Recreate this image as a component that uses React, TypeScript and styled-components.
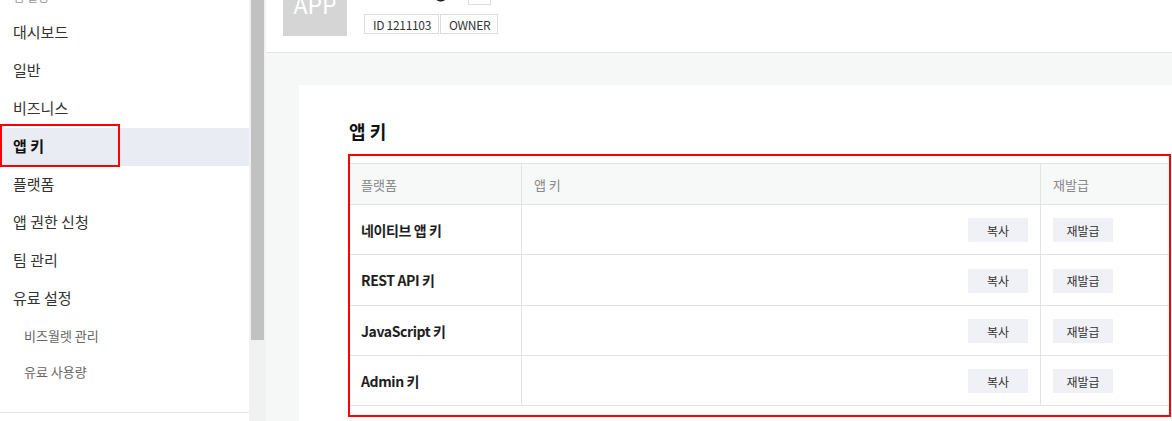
import React from "react";
import styled, { createGlobalStyle } from "styled-components";

const Global = createGlobalStyle`
  html, body { margin: 0; padding: 0; }
  body {
    width: 1172px;
    height: 421px;
    overflow: hidden;
    background: #ffffff;
    font-family: "Noto Sans CJK KR", "Noto Sans", sans-serif;
    color: #333;
  }
  * { box-sizing: border-box; }
`;

const Page = styled.div`
  display: flex;
  margin-top: -44px;
  min-height: 520px;
`;

const Sidebar = styled.nav`
  width: 249px;
  flex: none;
  background: #fff;
  padding-top: 22px;
  display: flex;
  flex-direction: column;
`;

const SideLabel = styled.div`
  height: 36px;
  display: flex;
  align-items: center;
  padding-left: 13px;
  font-size: 12px;
  color: #999;
`;

const NavItem = styled.div<{ $active?: boolean }>`
  position: relative;
  height: 38px;
  display: flex;
  align-items: center;
  padding: 0 0 3px 13px;
  font-size: 15px;
  color: ${(p) => (p.$active ? "#111" : "#333")};
  font-weight: ${(p) => (p.$active ? 700 : 400)};
  background: ${(p) => (p.$active ? "#e9ecf3" : "transparent")};
`;

const SubItem = styled.div`
  height: 36px;
  display: flex;
  align-items: center;
  padding: 0 0 2px 24px;
  font-size: 13px;
  color: #666;
`;

const SideFooter = styled.div`
  margin-top: 22px;
  border-top: 1px solid #e5e5e5;
  height: 40px;
`;

const Highlight = styled.span`
  position: absolute;
  pointer-events: none;
  border: 2px solid #ff0000;
`;

const SideHighlight = styled(Highlight)`
  left: 0;
  top: -4px;
  width: 120px;
  bottom: -1px;
  border-width: 2.5px;
`;

const ScrollTrack = styled.div`
  width: 17px;
  flex: none;
  background: #f1f1f1;
  padding: 0 2px;
`;

const ScrollThumb = styled.div`
  height: 384px;
  background: #c1c1c1;
`;

const Main = styled.main`
  flex: 1;
  min-width: 0;
  background: #f6f7f7;
  display: flex;
  flex-direction: column;
`;

const Header = styled.header`
  display: flex;
  gap: 17px;
  padding: 16px 17px;
  background: #fff;
  border-bottom: 1px solid #e5e5e5;
`;

const AppIcon = styled.div`
  width: 64px;
  height: 64px;
  flex: none;
  background: #d5d5d5;
  color: #fff;
  font-family: "Noto Sans CJK KR", "Noto Sans", sans-serif;
  font-size: 23px;
  display: flex;
  align-items: center;
  justify-content: center;
  padding-top: 0;
`;

const Info = styled.div`
  display: flex;
  flex-direction: column;
`;

const TitleRow = styled.div`
  height: 32px;
  display: flex;
  align-items: flex-end;
  gap: 7px;
`;

const Title = styled.div`
  font-size: 16px;
  font-weight: 700;
  color: #222;
  line-height: 22px;
  margin-bottom: 2px;
`;

const EditBox = styled.div`
  width: 23px;
  height: 22px;
  border: 1px solid #ddd;
  background: #fff;
  margin-bottom: -1px;
`;

const Badges = styled.div`
  display: flex;
  gap: 1px;
  margin-top: 10px;
`;

const Badge = styled.span`
  height: 20px;
  display: inline-flex;
  align-items: center;
  padding: 0 7px 0 8px;
  border: 1px solid #dcdcdc;
  font-size: 12px;
  letter-spacing: -0.3px;
  color: #333;
  background: #fff;
`;

const Body = styled.div`
  padding: 32px 0 0 33px;
`;

const Card = styled.section`
  width: 920px;
  background: #fff;
  padding: 33px 50px 40px 50px;
`;

const Heading = styled.h2`
  margin: 0 0 19px 0;
  font-size: 18px;
  line-height: 26px;
  font-weight: 700;
  color: #111;
`;

const TableWrap = styled.div`
  position: relative;
  width: 821px;
`;

const TableHighlight = styled(Highlight)`
  left: -1px;
  right: -1px;
  top: -9px;
  bottom: -11px;
`;

const Row = styled.div<{ $head?: boolean; $tall?: boolean }>`
  display: grid;
  grid-template-columns: 173px 519px 129px;
  height: ${(p) => (p.$head ? "42px" : p.$tall ? "51px" : "50px")};
  border-top: ${(p) => (p.$head ? "1px solid #e3e3e3" : "none")};
  border-bottom: 1px solid #e3e3e3;
  background: ${(p) => (p.$head ? "#f7f8f8" : "#fff")};
`;

const Cell = styled.div<{ $head?: boolean; $end?: boolean; $last?: boolean }>`
  display: flex;
  align-items: center;
  justify-content: ${(p) => (p.$end ? "flex-end" : "flex-start")};
  padding: 0 12px;
  border-right: ${(p) => (p.$last ? "none" : "1px solid #e3e3e3")};
  font-size: ${(p) => (p.$head ? "13px" : "14px")};
  font-weight: ${(p) => (p.$head ? 400 : 700)};
  color: ${(p) => (p.$head ? "#888" : "#1e1e1e")};
  letter-spacing: ${(p) => (p.$head ? "0" : "-0.4px")};
`;

const Button = styled.button`
  width: 60px;
  height: 24px;
  border: none;
  background: #f0f1f6;
  color: #333;
  font-family: "Noto Sans CJK KR", "Noto Sans", sans-serif;
  font-size: 12px;
  padding: 0;
  margin-top: 1px;
  cursor: pointer;
`;

const navItems = ["대시보드", "일반", "비즈니스", "앱 키", "플랫폼", "앱 권한 신청", "팀 관리", "유료 설정"];
const keys = ["네이티브 앱 키", "REST API 키", "JavaScript 키", "Admin 키"];

export default function App() {
  return (
    <>
      <Global />
      <Page>
        <Sidebar>
          <SideLabel>앱 설정</SideLabel>
          {navItems.map((n) => (
            <NavItem key={n} $active={n === "앱 키"}>
              {n}
              {n === "앱 키" && <SideHighlight />}
            </NavItem>
          ))}
          <SubItem>비즈월렛 관리</SubItem>
          <SubItem>유료 사용량</SubItem>
          <SideFooter />
        </Sidebar>
        <ScrollTrack>
          <ScrollThumb />
        </ScrollTrack>
        <Main>
          <Header>
            <AppIcon>APP</AppIcon>
            <Info>
              <TitleRow>
                <Title>Kakao Login</Title>
                <EditBox />
              </TitleRow>
              <Badges>
                <Badge>ID 1211103</Badge>
                <Badge>OWNER</Badge>
              </Badges>
            </Info>
          </Header>
          <Body>
            <Card>
              <Heading>앱 키</Heading>
              <TableWrap>
                <Row $head>
                  <Cell $head>플랫폼</Cell>
                  <Cell $head>앱 키</Cell>
                  <Cell $head $last>재발급</Cell>
                </Row>
                {keys.map((k, i) => (
                  <Row key={k} $tall={i === 1}>
                    <Cell>{k}</Cell>
                    <Cell $end>
                      <Button>복사</Button>
                    </Cell>
                    <Cell $last>
                      <Button>재발급</Button>
                    </Cell>
                  </Row>
                ))}
                <TableHighlight />
              </TableWrap>
            </Card>
          </Body>
        </Main>
      </Page>
    </>
  );
}
